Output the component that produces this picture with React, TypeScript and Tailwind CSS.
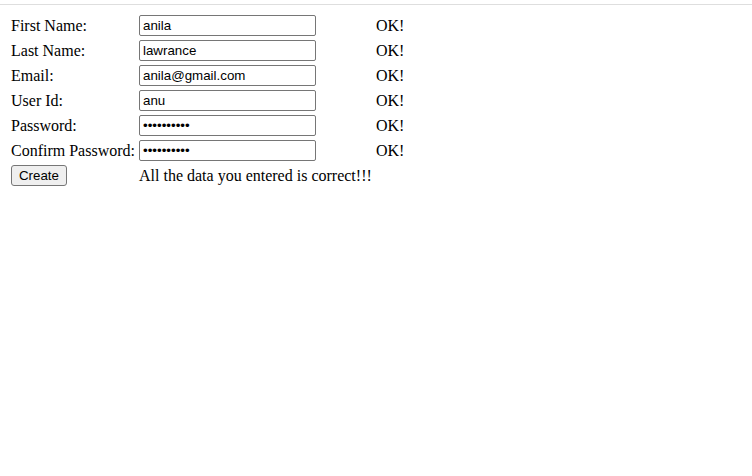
import React from "react";

const rows: { label: string; value: string; type: string }[] = [
  { label: "First Name:", value: "anila", type: "text" },
  { label: "Last Name:", value: "lawrance", type: "text" },
  { label: "Email:", value: "anila@gmail.com", type: "text" },
  { label: "User Id:", value: "anu", type: "text" },
  { label: "Password:", value: "anila12345", type: "password" },
  { label: "Confirm Password:", value: "anila12345", type: "password" },
];

export default function App() {
  return (
    <div className="w-[752px] h-[476px] bg-white text-black overflow-hidden" style={{ fontFamily: '"Liberation Serif", "Times New Roman", serif' }}>
      <div className="mt-[4px] h-px bg-[#dedede]" />
      <div className="pt-[9px] pl-[11px] grid grid-cols-[128px_237px_auto] auto-rows-[23px] gap-y-[2px] text-[16px]">
        {rows.map((r) => (
          <React.Fragment key={r.label}>
            <div className="flex items-center whitespace-nowrap">{r.label}</div>
            <div className="flex items-center">
              <input
                type={r.type}
                value={r.value}
                readOnly
                className="w-[177px] h-[21px] border border-[#767676] rounded-[2px] pl-[3px] pr-[2px] py-[1px] text-[13.333px] text-black bg-white outline-none"
                style={{ fontFamily: '"Liberation Sans", Arial, sans-serif' }}
              />
            </div>
            <div className="flex items-center">OK!</div>
          </React.Fragment>
        ))}
        <div className="flex items-center">
          <button
            className="w-[56px] h-[21px] border border-[#767676] rounded-[3px] bg-[#efefef] text-[13.333px] text-black flex items-center justify-center"
            style={{ fontFamily: '"Liberation Sans", Arial, sans-serif' }}
          >
            Create
          </button>
        </div>
        <div className="flex items-center whitespace-nowrap">All the data you entered is correct!!!</div>
        <div />
      </div>
    </div>
  );
}
